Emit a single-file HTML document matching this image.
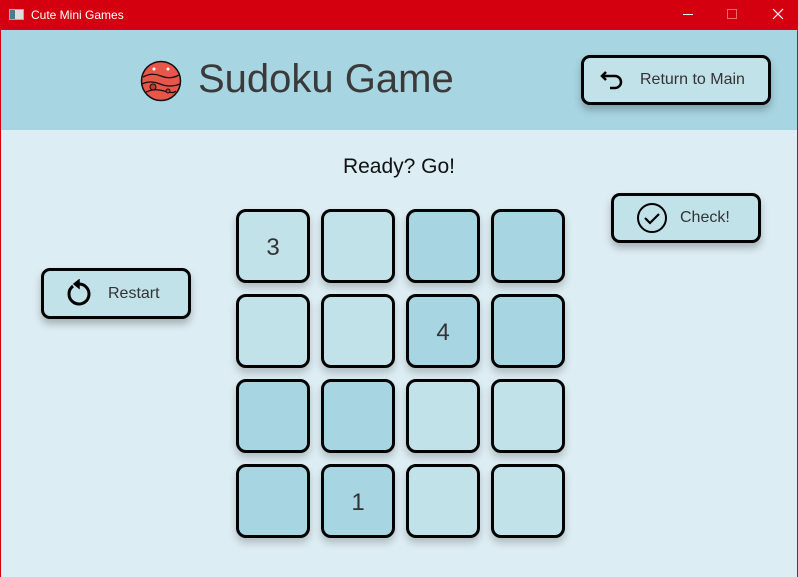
<!DOCTYPE html>
<html><head><meta charset="utf-8"><style>
*{margin:0;padding:0;box-sizing:border-box}
body{width:798px;height:577px;overflow:hidden;background:#dcedf3;font-family:"Liberation Sans",sans-serif;position:relative}
.tb{position:absolute;left:0;top:0;width:798px;height:30px;background:#d40010;color:#fff;font-size:12px}
.hd{position:absolute;left:0;top:30px;width:798px;height:100px;background:#a8d5e2}
.edge{position:absolute;top:30px;width:1px;height:547px;background:#d40010}
.btn{position:absolute;border:3px solid #000;border-radius:9px;background:#c2e2ea;box-shadow:0 5px 8px rgba(0,0,0,.25);font-size:16px;color:#333;display:flex;align-items:center}
.cell{position:absolute;width:74px;height:74px;border:3px solid #000;border-radius:10px;box-shadow:0 5px 8px rgba(0,0,0,.2);font-size:24px;color:#333;display:flex;align-items:center;justify-content:center;padding-top:3px}
.L{background:#c2e2ea}.D{background:#a8d5e2}
</style></head><body>
<div class="tb">
<div style="position:absolute;left:9px;top:9px;width:15px;height:11px;background:#ddd;border:1px solid #aaa"><div style="width:5px;height:9px;background:#4b7c8c"></div></div>
<span style="position:absolute;left:31px;top:8px">Cute Mini Games</span>
<div style="position:absolute;left:683px;top:14px;width:10px;height:1px;background:#fff"></div>
<div style="position:absolute;left:727px;top:9px;width:10px;height:10px;border:1px solid #e86a70"></div>
<svg style="position:absolute;left:772px;top:8px" width="12" height="12"><path d="M1 1L11 11M11 1L1 11" stroke="#fff" stroke-width="1.2"/></svg>
</div>
<div class="hd">
<svg style="position:absolute;left:140px;top:30px" width="42" height="42" viewBox="0 0 42 42"><circle cx="21" cy="21" r="19.5" fill="#e8564a" stroke="#111" stroke-width="1.5"/><path d="M3 17Q12 12 21 16T39 15M2 24Q10 20 20 24T40 24M6 32Q15 28 24 31T36 31" stroke="#111" fill="none" stroke-width="1.3"/><circle cx="13" cy="27" r="3" fill="#c33" stroke="#111"/><circle cx="28" cy="31" r="2" fill="#c33" stroke="#111"/><circle cx="14" cy="9" r="1.5" fill="#fff"/><circle cx="28" cy="9" r="1.5" fill="#fff"/></svg>
<div style="position:absolute;left:198px;top:27px;font-size:40px;color:#3a3a3a">Sudoku Game</div>
</div>
<div class="edge" style="left:0"></div><div class="edge" style="left:797px"></div>
<div class="btn" style="left:581px;top:55px;width:190px;height:50px">
<svg style="margin-left:16px" width="26" height="22" viewBox="0 0 26 22"><path d="M6 3L2 7L6 11M2 7H15a6 6 0 0 1 0 12H10" stroke="#000" stroke-width="2.5" fill="none"/></svg>
<span style="margin-left:14px">Return to Main</span></div>
<div style="position:absolute;left:0;width:798px;top:155px;text-align:center;font-size:21px;color:#111">Ready? Go!</div>
<div class="btn" style="left:611px;top:193px;width:150px;height:50px">
<svg style="margin-left:22px" width="32" height="32" viewBox="0 0 32 32"><circle cx="16" cy="16" r="14" stroke="#000" stroke-width="2" fill="none"/><path d="M9 16L14 21L23 12" stroke="#000" stroke-width="2.2" fill="none"/></svg>
<span style="margin-left:12px">Check!</span></div>
<div class="btn" style="left:41px;top:268px;width:150px;height:51px">
<svg style="margin-left:20px" width="30" height="30" viewBox="0 0 30 30"><path d="M9 7A10 10 0 1 0 15 5" stroke="#000" stroke-width="3" fill="none"/><path d="M15 1L15 9L10 5Z" fill="#000" stroke="#000" stroke-width="1.5"/></svg>
<span style="margin-left:14px">Restart</span></div>
<div class="cell L" style="left:236px;top:209px">3</div>
<div class="cell L" style="left:321px;top:209px"></div>
<div class="cell D" style="left:406px;top:209px"></div>
<div class="cell D" style="left:491px;top:209px"></div>
<div class="cell L" style="left:236px;top:294px"></div>
<div class="cell L" style="left:321px;top:294px"></div>
<div class="cell D" style="left:406px;top:294px">4</div>
<div class="cell D" style="left:491px;top:294px"></div>
<div class="cell D" style="left:236px;top:379px"></div>
<div class="cell D" style="left:321px;top:379px"></div>
<div class="cell L" style="left:406px;top:379px"></div>
<div class="cell L" style="left:491px;top:379px"></div>
<div class="cell D" style="left:236px;top:464px"></div>
<div class="cell D" style="left:321px;top:464px">1</div>
<div class="cell L" style="left:406px;top:464px"></div>
<div class="cell L" style="left:491px;top:464px"></div>
</body></html>
